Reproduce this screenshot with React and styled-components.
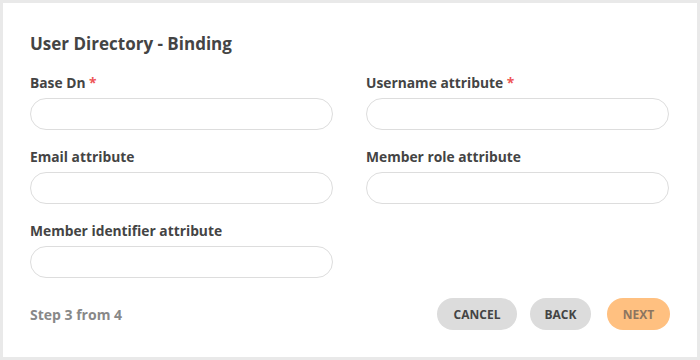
import React from "react";
import styled, { createGlobalStyle } from "styled-components";

const Global = createGlobalStyle`
  html, body { margin: 0; padding: 0; background: #e9e9e9; }
  body { font-family: "Open Sans", "Liberation Sans", sans-serif; }
  * { box-sizing: border-box; }
`;

const Page = styled.div`
  width: 700px;
  height: 360px;
  padding: 3px;
`;

const Card = styled.div`
  background: #fff;
  height: 354px;
  padding: 30px 27px 0 27px;
  display: flex;
  flex-direction: column;
`;

const Title = styled.h2`
  margin: 0;
  font-size: 17px;
  line-height: 22px;
  font-weight: 700;
  color: #444;
`;

const Grid = styled.div`
  margin-top: 18px;
  display: grid;
  grid-template-columns: 303px 303px;
  column-gap: 33px;
  row-gap: 17px;
`;

const Field = styled.div`
  display: flex;
  flex-direction: column;
`;

const Label = styled.label`
  font-size: 13.8px;
  line-height: 19px;
  font-weight: 700;
  color: #444;
  margin-bottom: 6px;
`;

const Star = styled.span`
  color: #e55;
`;

const Input = styled.input`
  height: 32px;
  border: 1px solid #ddd;
  border-radius: 16px;
  background: #fff;
  outline: none;
  padding: 0 14px;
  font-family: inherit;
`;

const Footer = styled.div`
  margin-top: 20px;
  display: flex;
  align-items: center;
  justify-content: space-between;
`;

const Step = styled.span`
  font-size: 14px;
  font-weight: 700;
  color: #888;
`;

const Buttons = styled.div`
  display: flex;
  align-items: center;
`;

const Button = styled.button`
  height: 32px;
  width: ${(p) => p.$w}px;
  border: none;
  border-radius: 16px;
  padding: 0;
  font-family: inherit;
  font-size: 12px;
  font-weight: 700;
  background: ${(p) => (p.$primary ? "#ffc080" : "#dcdcdc")};
  color: ${(p) => (p.$primary ? "#8c7560" : "#444")};
  cursor: pointer;
  margin-left: ${(p) => p.$ml || 0}px;
`;

const fields = [
  { label: "Base Dn", req: true },
  { label: "Username attribute", req: true },
  { label: "Email attribute" },
  { label: "Member role attribute" },
  { label: "Member identifier attribute" },
];

export default function App() {
  return (
    <>
      <Global />
      <Page>
        <Card>
          <Title>User Directory - Binding</Title>
          <Grid>
            {fields.map((f) => (
              <Field key={f.label}>
                <Label>
                  {f.label}
                  {f.req && <Star> *</Star>}
                </Label>
                <Input />
              </Field>
            ))}
          </Grid>
          <Footer>
            <Step>Step 3 from 4</Step>
            <Buttons>
              <Button $w={80}>CANCEL</Button>
              <Button $w={61} $ml={13}>BACK</Button>
              <Button $w={63} $ml={16} $primary>NEXT</Button>
            </Buttons>
          </Footer>
        </Card>
      </Page>
    </>
  );
}
